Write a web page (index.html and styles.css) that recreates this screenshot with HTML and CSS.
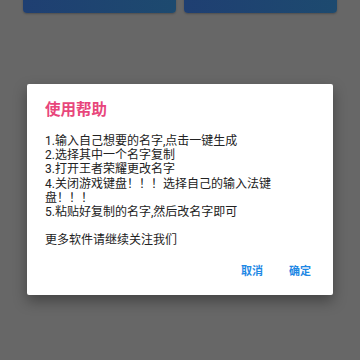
FILE: index.html
```html
<!DOCTYPE html>
<html lang="zh-CN">
<head>
  <meta charset="UTF-8">
  <title>使用帮助</title>
  <link rel="stylesheet" href="styles.css">
</head>
<body>
  <div class="toolbar">
    <div class="tool-btn"></div>
    <div class="tool-btn"></div>
  </div>

  <!-- 帮助对话框 -->
  <div class="dialog">
    <h3 class="title">使用帮助</h3>
    <div class="content">
      <p>1.输入自己想要的名字,点击一键生成</p>
      <p>2.选择其中一个名字复制</p>
      <p>3.打开王者荣耀更改名字</p>
      <p>4.关闭游戏键盘！！！选择自己的输入法键<br>盘！！！</p>
      <p>5.粘贴好复制的名字,然后改名字即可</p>
      <p class="blank"></p>
      <p>更多软件请继续关注我们</p>
    </div>
    <div class="actions">
      <span class="action">取消</span>
      <span class="action">确定</span>
    </div>
  </div>
</body>
</html>
```

FILE: styles.css
```css
html, body {
  height: 100%;
}

body {
  margin: 0;
  padding: 0;
  background-color: #676767;
  font-family: Roboto, "Noto Sans CJK SC", sans-serif;
  overflow: hidden;
}

.toolbar {
  display: flex;
  gap: 8px;
  padding: 0 23px;
  height: 13px;
}

.tool-btn {
  flex: 1;
  height: 43px;
  margin-top: -30px;
  border-radius: 4px;
  background: linear-gradient(90deg, #1f3f72, #1d4a6f);
  box-shadow: 0 1px 2px rgba(0, 0, 0, 0.25);
}

.dialog {
  width: 306px;
  margin: 71px 0 0 27px;
  padding: 16px 0 15px 18px;
  box-sizing: border-box;
  background-color: #FFF;
  border-radius: 2px;
  box-shadow: 0 6px 14px rgba(0, 0, 0, 0.35);
}

.title {
  margin: 0;
  font-size: 15.5px;
  line-height: 20px;
  font-weight: bold;
  color: #e8467b;
}

.content {
  margin-top: 14px;
  font-size: 12px;
  line-height: 14.2px;
  color: #222;
}

.content p {
  margin: 0;
}

.content .blank {
  height: 14.2px;
}

.actions {
  display: flex;
  justify-content: flex-end;
  gap: 26px;
  margin-top: 16px;
  padding-right: 22px;
}

.action {
  font-size: 11px;
  line-height: 16px;
  font-weight: bold;
  color: #1e88e5;
}
```
